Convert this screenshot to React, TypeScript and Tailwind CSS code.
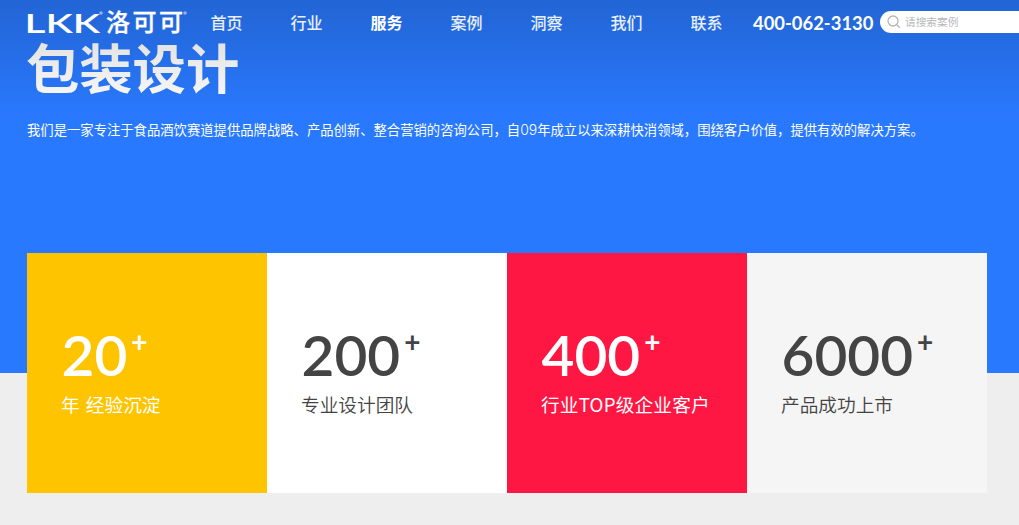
import React from 'react';

const navItems = [
  { label: '首页' },
  { label: '行业' },
  { label: '服务', active: true },
  { label: '案例' },
  { label: '洞察' },
  { label: '我们' },
  { label: '联系' },
];

const stats = [
  { value: '20', label: '年 经验沉淀', box: 'bg-[#ffc400] text-white', labelClass: 'font-normal [word-spacing:2px]' },
  { value: '200', label: '专业设计团队', box: 'bg-white text-[#444]', labelClass: 'font-[350]' },
  { value: '400', label: '行业TOP级企业客户', box: 'bg-[#ff1744] text-white', labelClass: 'font-normal tracking-[0.2px]' },
  { value: '6000', label: '产品成功上市', box: 'bg-[#f5f5f5] text-[#444]', labelClass: 'font-[350]' },
];

const Logo = () => (
  <svg className="h-6 w-[162px] shrink-0 overflow-visible" viewBox="0 0 162 24" fill="#fff">
    <text x="-2.5" y="23" fontFamily="Lato" fontWeight="600" fontSize="27" textLength="75.5" lengthAdjust="spacingAndGlyphs">LKK</text>
    <text x="79" y="21" fontFamily="Noto Sans CJK SC" fontWeight="500" fontSize="24" textLength="77" lengthAdjust="spacing" stroke="#fff" strokeWidth="0.3">洛可可</text>
    <g fill="#fff" fillOpacity="0.5">
      <circle cx="74" cy="3" r="1.8" />
      <circle cx="158" cy="3" r="1.8" />
    </g>
  </svg>
);

const SearchIcon = () => (
  <svg className="h-[14px] w-[14px]" viewBox="0 0 14 14" fill="none" stroke="#b5b5b5" strokeWidth="1.3" strokeLinecap="round">
    <circle cx="6" cy="6" r="5" />
    <path d="M9.6 9.6L12.4 12.2" />
  </svg>
);

const Header = () => (
  <header className="absolute inset-x-0 top-0 h-[120px] overflow-hidden bg-linear-to-b from-black/17 to-transparent pl-[27px]">
    <div className="flex h-11 items-center">
      <Logo />
      <nav className="ml-[21.5px] flex shrink-0">
        {navItems.map((item) => (
          <a
            key={item.label}
            className={item.active ? 'w-20 text-base leading-5 font-bold text-white' : 'w-20 text-base leading-5 font-medium text-white/90'}
          >
            {item.label}
          </a>
        ))}
      </nav>
      <span className="-ml-[17.5px] w-[127px] shrink-0 pt-px font-[Lato] text-[18.4px] leading-5 font-bold whitespace-nowrap text-white">
        400-062-3130
      </span>
      <div className="flex h-[22px] w-[160px] shrink-0 items-center gap-1 rounded-full bg-white pl-[7px] text-[10.67px] text-[#b8b8b8]">
        <SearchIcon />
        <span>请搜索案例</span>
      </div>
    </div>
  </header>
);

const App = () => {
  return (
    <div className="relative h-[525px] overflow-hidden bg-[#eee] font-['Noto_Sans_CJK_SC',sans-serif]">
      <section className="h-[373px] bg-[#2979ff] px-[27px] pt-[35px] text-white">
        <h1 className="-ml-px text-[53.3px] leading-[62px] font-bold">包装设计</h1>
        <p className="mt-[23px] text-[13.33px] leading-5 whitespace-nowrap">
          我们是一家专注于食品酒饮赛道提供品牌战略、产品创新、整合营销的咨询公司，自
          <span className="font-[Inter] text-[14px] leading-none font-light">09</span>
          年成立以来深耕快消领域，围绕客户价值，提供有效的解决方案。
        </p>
        <div className="mt-[113px] flex">
          {stats.map((stat) => (
            <div key={stat.value} className={`h-60 w-60 shrink-0 pt-[71px] pl-[34px] ${stat.box}`}>
              <div className="ml-[0.5px] flex font-[Lato] leading-[60px]">
                <span className="text-[56.7px] font-semibold">{stat.value}</span>
                <span className="ml-1 text-[28px] leading-[34px] font-bold">+</span>
              </div>
              <div className={`mt-[6px] text-[18.67px] leading-7 whitespace-nowrap ${stat.labelClass}`}>{stat.label}</div>
            </div>
          ))}
        </div>
      </section>

      <Header />
    </div>
  );
};

export default App;
